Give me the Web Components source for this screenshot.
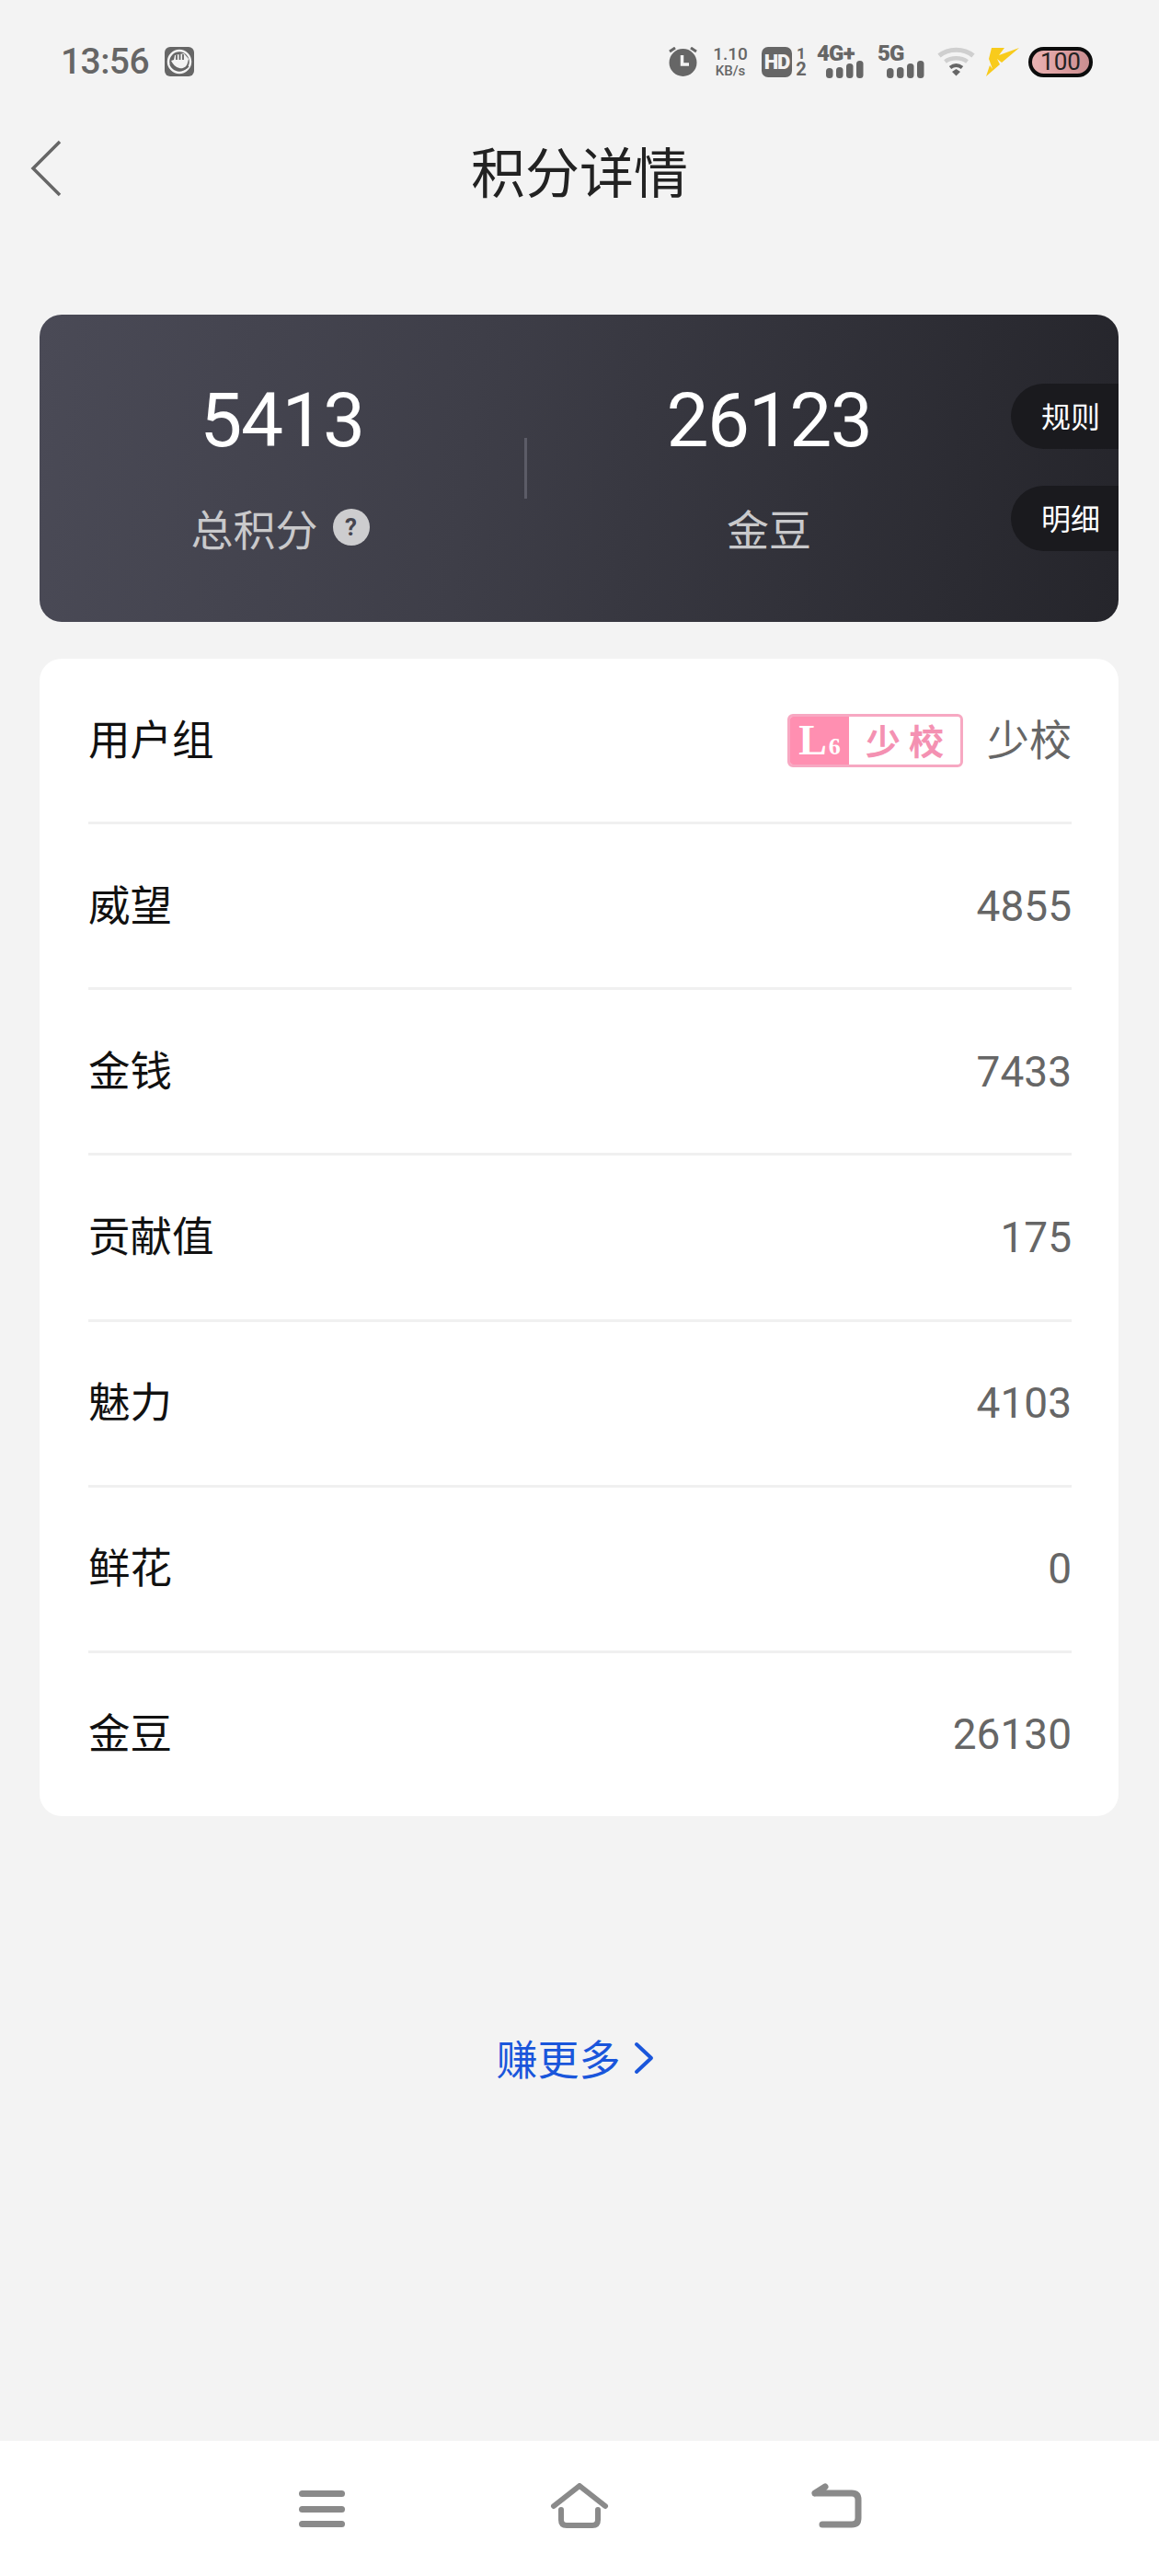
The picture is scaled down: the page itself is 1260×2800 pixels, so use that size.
<!DOCTYPE html>
<html lang="zh">
<head>
<meta charset="utf-8">
<title>积分详情</title>
<style>
  html, body { margin: 0; padding: 0; }
  body {
    width: 1260px;
    height: 2800px;
    display: flex;
    flex-direction: column;
    background: #f3f3f3;
    font-family: Roboto, "Noto Sans CJK SC", sans-serif;
  }
</style>
</head>
<body>
  <status-bar></status-bar>
  <nav-header>积分详情</nav-header>
  <score-card>
    <score-stat slot="first" value="5413" help>总积分</score-stat>
    <score-stat slot="second" value="26123">金豆</score-stat>
    <side-pill slot="pills">规则</side-pill>
    <side-pill slot="pills">明细</side-pill>
  </score-card>
  <detail-list>
    <detail-row label="用户组"><level-badge></level-badge><span style="margin-top:-8px">少校</span></detail-row>
    <detail-row label="威望">4855</detail-row>
    <detail-row label="金钱">7433</detail-row>
    <detail-row label="贡献值">175</detail-row>
    <detail-row label="魅力">4103</detail-row>
    <detail-row label="鲜花">0</detail-row>
    <detail-row label="金豆" last>26130</detail-row>
  </detail-list>
  <earn-link>赚更多</earn-link>
  <bottom-nav></bottom-nav>

<script>
  // Small helper, every element just stamps its own markup into an open shadow root
  function define(name, html, extra) {
    const template = document.createElement("template");
    template.innerHTML = html;
    class Element extends HTMLElement {
      constructor() {
        super();
        this.attachShadow({mode: "open"});
        this.shadowRoot.appendChild(template.content.cloneNode(true));
      }
      connectedCallback() {
        if (extra) extra.call(this, this.shadowRoot);
      }
    }
    customElements.define(name, Element);
  }

  const bars = `
    <svg width="41" height="19" viewBox="0 0 41 19" fill="#666">
      <rect x="0" y="8" width="7.500" height="11" rx="3.500"/><rect x="11" y="7" width="7.500" height="12" rx="3.500"/>
      <rect x="22" y="3" width="7.500" height="16" rx="3.500"/><rect x="33" y="0" width="7.500" height="19" rx="3.500"/>
    </svg>`;

  define("status-bar", `
    <style>
      :host {
        display: flex;
        align-items: center;
        height: 40px;
        padding: 47px 72px 0 66px;
        color: #666;
      }
      #time { font-size: 39px; font-weight: 500; line-height: 40px; letter-spacing: -.6px; }
      #hand { margin-left: 17px; }
      #right { margin-left: auto; display: flex; align-items: center; }
      svg { display: block; flex: none; }
      #speed {
        width: 38px; margin-left: 16px;
        display: flex; flex-direction: column; align-items: center;
        font-weight: 500; color: #666;
      }
      #speed b { font-size: 19px; font-weight: 500; line-height: 19px; }
      #speed i { font-size: 15px; font-style: normal; line-height: 17px; margin-top: 1px; }
      #hd {
        margin-left: 15px; width: 33px; height: 33px; border-radius: 7px; background: #666;
        color: #f3f3f3; font-size: 22px; font-weight: 900; line-height: 33px; text-align: center;
        letter-spacing: -1px;
      }
      #sim {
        width: 10px; margin-left: 5px; display: flex; flex-direction: column; align-items: center;
        font-weight: 700;
      }
      #sim span:first-child { font-size: 17px; line-height: 16px; }
      #sim span:last-child { font-size: 20px; line-height: 18px; }
      .net { position: relative; width: 52px; height: 35px; margin-left: 12px; }
      .net span {
        position: absolute; left: 0; top: -2px;
        font-size: 24px; font-weight: 900; line-height: 20px; letter-spacing: -.8px;
      }
      .net svg { position: absolute; left: 10px; bottom: 0; }
      #net5 { margin-left: 14px; }
      #wifi { margin-left: 13px; }
      #bolt { margin-left: 12px; }
      #battery {
        margin-left: 10px; box-sizing: border-box; width: 70px; height: 33px;
        border: 4px solid #0c0c0c; border-radius: 17px;
        background: linear-gradient(90deg, #e9b3b3, #d99a9c 60%, #c98f90);
        color: #222; font-size: 26px; line-height: 25px; text-align: center;
      }
    </style>
    <span id="time">13:56</span>
    <svg id="hand" width="32" height="32" viewBox="0 0 32 32">
      <rect width="32" height="32" rx="6" fill="#666"/>
      <circle cx="16" cy="16" r="12" fill="none" stroke="#f3f3f3" stroke-width="2.500"/>
      <path d="M7 15 L10 14 L11 9 L21 7 L26 13 L25 17 C24 22 20 24 16 23 C12 22 9 19 7 15 Z" fill="#f3f3f3"/>
      <path d="M13 8.500 V14 M16.500 7.500 V14 M20 8 V14" stroke="#666" stroke-width="1.800" fill="none"/>
      <path d="M6 19 C9 25 19 28 26 21" stroke="#666" stroke-width="1.500" fill="none"/>
    </svg>
    <div id="right">
      <svg width="33" height="32" viewBox="0 0 33 32">
        <circle cx="16.500" cy="17" r="15" fill="#666"/>
        <path d="M2 5 L8 1 M31 5 L25 1" stroke="#666" stroke-width="3"/>
        <path d="M15.500 9 V19 H23" stroke="#f3f3f3" stroke-width="3.500" fill="none"/>
      </svg>
      <div id="speed"><b>1.10</b><i>KB/s</i></div>
      <div id="hd">HD</div>
      <div id="sim"><span>1</span><span>2</span></div>
      <div class="net"><span>4G+</span>${bars}</div>
      <div class="net" id="net5"><span>5G</span>${bars}</div>
      <svg id="wifi" width="41" height="32" viewBox="0 0 41 32" fill="none">
        <path d="M2 9.500 C12 1 29 1 39 9.500" stroke="#cfcfcf" stroke-width="5"/>
        <path d="M8.500 16 C15 11 26 11 32.500 16" stroke="#cfcfcf" stroke-width="4.500"/>
        <path d="M14 22.500 C18 19.500 23 19.500 27 22.500" stroke="#666" stroke-width="4"/>
        <path d="M16 27 L20.500 24 L25 27 L20.500 31.500 Z" fill="#666"/>
      </svg>
      <svg id="bolt" width="36" height="32" viewBox="0 0 36 32">
        <path d="M6 1 H20 L14 9 L36 1 L17 17 L12 13 L15 19 L0 32 L4 20 L7 24 L3 13 Z" fill="#f8cb1c"/>
      </svg>
      <div id="battery">100</div>
    </div>
  `);

  define("nav-header", `
    <style>
      :host {
        display: flex;
        align-items: center;
        justify-content: center;
        position: relative;
        height: 114px;
        margin-top: 43px;
        color: #222;
        font: 59px/110px "Noto Sans CJK SC", sans-serif;
      }
      svg { position: absolute; left: 32px; top: 20px; }
    </style>
    <svg width="38" height="66" viewBox="0 0 38 66" fill="none">
      <path d="M33 4 L4 33 L33 62" stroke="#666" stroke-width="3.500"/>
    </svg>
    <span style="margin-top:-4px"><slot></slot></span>
  `);

  define("score-card", `
    <style>
      :host {
        display: grid;
        grid-template-columns: 527px 3px 526px 1fr;
        align-items: center;
        height: 334px;
        margin: 98px 44px 0 43px;
        border-radius: 24px;
        background: linear-gradient(97deg, #4a4a56 0%, #3e3e48 40%, #25252b 100%);
      }
      #line { width: 3px; height: 66px; background: #5c5c67; }
      #pills { display: flex; flex-direction: column; gap: 40px; margin-top: -2px; }
    </style>
    <slot name="first"></slot>
    <div id="line"></div>
    <slot name="second"></slot>
    <div id="pills"><slot name="pills"></slot></div>
  `);

  define("score-stat", `
    <style>
      :host { display: flex; flex-direction: column; align-items: center; margin-top: -8px; }
      #value { color: #fff; font-size: 82px; line-height: 90px; letter-spacing: -1.500px; }
      #label {
        display: flex; align-items: center; gap: 16px;
        margin-top: 45px;
        color: #c9c9cb;
        font: 46px/52px "Noto Sans CJK SC", sans-serif;
      }
      #help {
        display: none;
        width: 40px; height: 40px; border-radius: 50%;
        background: #cdcdcf; color: #45454f;
        font: 700 26px/40px Roboto, sans-serif; text-align: center;
      }
      :host([help]) #help { display: block; }
      :host([help]) #label { padding-right: 4px; }
    </style>
    <div id="value"></div>
    <div id="label"><span><slot></slot></span><span id="help">?</span></div>
  `, function(shadow) {
    shadow.querySelector("#value").textContent = this.getAttribute("value");
  });

  define("side-pill", `
    <style>
      :host {
        display: block;
        box-sizing: border-box;
        height: 71px;
        padding-left: 33px;
        border-radius: 36px 0 0 36px;
        background: #1a1a1e;
        color: #fff;
        font: 32px/68px "Noto Sans CJK SC", sans-serif;
      }
    </style>
    <slot></slot>
  `);

  define("detail-list", `
    <style>
      :host {
        display: flex;
        flex-direction: column;
        height: 1258px;
        margin: 40px 44px 0 43px;
        padding: 0 51px 0 53px;
        border-radius: 24px;
        background: #fff;
      }
    </style>
    <slot></slot>
  `);

  define("detail-row", `
    <style>
      :host {
        flex: 1;
        display: flex;
        align-items: center;
        justify-content: space-between;
        border-bottom: 3px solid #f0f0f0;
        color: #666;
        font: 46px "Noto Sans CJK SC", sans-serif;
      }
      :host([last]) { border-bottom: none; }
      #label { color: #111; margin-top: -8px; font-size: 45.500px; }
      #value { display: flex; align-items: center; gap: 26px; font-family: Roboto, "Noto Sans CJK SC", sans-serif; }
    </style>
    <span id="label"></span>
    <span id="value"><slot></slot></span>
  `, function(shadow) {
    shadow.querySelector("#label").textContent = this.getAttribute("label");
  });

  define("level-badge", `
    <style>
      :host {
        display: flex;
        box-sizing: border-box;
        width: 191px;
        height: 58px;
        border: 3px solid #f7a8c2;
        border-radius: 6px;
        background: #fff;
        overflow: hidden;
      }
      #lv {
        width: 64px;
        margin-left: -3px;
        padding-left: 3px;
        background: #ff8fb1;
        color: #fff;
        font: 700 46px/52px "Liberation Serif", serif;
        text-align: center;
        white-space: nowrap;
      }
      #lv small { font-size: 26px; margin-left: 2px; }
      #rank {
        flex: 1;
        color: #f491b2;
        font: 700 38px/50px "Noto Sans CJK SC", sans-serif;
        letter-spacing: 9px;
        text-align: center;
        text-indent: 9px;
      }
    </style>
    <div id="lv">L<small>6</small></div>
    <div id="rank">少校</div>
  `);

  define("earn-link", `
    <style>
      :host {
        flex: 1;
        display: flex;
        align-items: flex-start;
        justify-content: center;
        padding: 230px 10px 0 0;
        color: #1a56db;
        font: 45px/66px "Noto Sans CJK SC", sans-serif;
      }
      svg { margin: 15px 0 0 14px; }
    </style>
    <slot></slot>
    <svg width="22" height="36" viewBox="0 0 22 36" fill="none">
      <path d="M3 3 L19 18 L3 33" stroke="#1a56db" stroke-width="4" stroke-linecap="round" stroke-linejoin="round"/>
    </svg>
  `);

  define("bottom-nav", `
    <style>
      :host {
        flex: none;
        display: flex;
        justify-content: center;
        height: 147px;
        background: #fff;
      }
      div { width: 280px; display: flex; justify-content: center; padding-top: 46px; }
      svg { display: block; }
    </style>
    <div>
      <svg width="60" height="56" viewBox="0 0 60 56" fill="#8a8a8a">
        <rect x="5" y="8" width="50" height="7" rx="3.500"/>
        <rect x="5" y="25" width="50" height="7" rx="3.500"/>
        <rect x="5" y="41" width="50" height="7" rx="3.500"/>
      </svg>
    </div>
    <div>
      <svg width="64" height="56" viewBox="0 0 64 56" fill="none" stroke="#8a8a8a" stroke-width="6" stroke-linecap="round" stroke-linejoin="round">
        <path d="M4 25 L32 3 L60 25"/>
        <path d="M12 29 V40 Q12 46 18 46 H46 Q52 46 52 40 V29"/>
      </svg>
    </div>
    <div>
      <svg width="60" height="56" viewBox="0 0 60 56" fill="none" stroke="#8a8a8a" stroke-width="7" stroke-linecap="round" stroke-linejoin="round">
        <path d="M6 11 L17 4 M6 11 H46 Q53 11 53 18 V38 Q53 45 46 45 H14"/>
      </svg>
    </div>
  `);
</script>
</body>
</html>
